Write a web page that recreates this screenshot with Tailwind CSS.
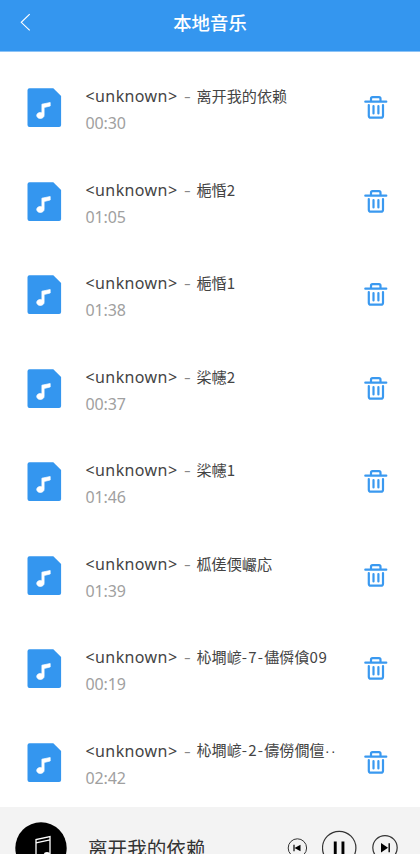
<!DOCTYPE html>
<html lang="zh">
<head>
<meta charset="utf-8">
<title>本地音乐</title>
<script src="https://cdn.jsdelivr.net/npm/@tailwindcss/browser@4"></script>
</head>
<body class="w-[420px] h-[854px] overflow-hidden bg-white font-['Noto_Sans','Noto_Sans_CJK_SC',sans-serif]">
<div class="flex h-[854px] w-[420px] flex-col overflow-hidden">
  <header class="grid h-[51px] shrink-0 grid-cols-[60px_1fr_60px] border-b border-[#8cc3f6] bg-[#3496ef] text-white box-content">
    <svg class="mt-[13px] ml-[19px]" width="14" height="19" viewBox="0 0 14 19" fill="none" stroke="#fff" stroke-width="1.15"><path d="M10.700 1.200 2.300 9.300l8.400 8.100"/></svg>
    <h1 class="h-[45px] text-center text-[18.4px] leading-[45px] font-medium font-['Noto_Sans_CJK_SC',sans-serif]">本地音乐</h1>
  </header>
  <main id="list" class="flex h-[755px] shrink-0 flex-col pt-[9.25px]"></main>
  <footer class="flex h-[90px] shrink-0 items-start bg-[#f3f3f3]">
    <svg class="mt-[15px] ml-[15px] shrink-0" width="52" height="52" viewBox="0 0 52 52"><circle cx="26" cy="26" r="25.700" fill="#000"/><path d="M21 34V17.500l14-3V32" fill="none" stroke="#fff" stroke-width="1.300"/><path d="M21 20.800l14-3" stroke="#fff" stroke-width="1.200"/><ellipse cx="18" cy="34.500" rx="3.300" ry="2.500" fill="#fff"/><ellipse cx="32" cy="32.500" rx="3.200" ry="2.600" fill="#fff"/></svg>
    <div class="mt-[27px] ml-[21px] w-[199px] text-[19.6px] leading-[28px] whitespace-nowrap text-[#333] font-['Noto_Sans_CJK_SC',sans-serif]">离开我的依赖</div>
    <svg class="mt-[31px]" width="20" height="20" viewBox="0 0 20 20"><circle cx="10.400" cy="10" r="9.200" fill="none" stroke="#333" stroke-width="1"/><path d="M7 6.800v6.500" stroke="#000" stroke-width="1.200"/><path d="M13.500 6.800v6.500L7.500 10z"/></svg>
    <svg class="mt-[23px] ml-[15px]" width="36" height="36" viewBox="0 0 36 36"><circle cx="17.200" cy="18" r="16.700" fill="none" stroke="#333" stroke-width="1.200"/><path d="M11.800 11.500h2.900v14h-2.900zM19.500 11.500h2.900v14h-2.900z"/></svg>
    <svg class="mt-[28px] ml-[13px]" width="28" height="28" viewBox="0 0 28 28"><circle cx="14" cy="12.800" r="12.200" fill="none" stroke="#333" stroke-width="1.200"/><path d="M10 8v9.600l7-4.800z"/><path d="M18.200 8.300v9" stroke="#000" stroke-width="1.400"/></svg>
  </footer>
</div>
<template id="row">
  <div class="flex h-[93.5px] shrink-0">
    <svg class="mt-[26px] ml-[26px] shrink-0" width="36" height="42" viewBox="0 0 36 42"><path d="M3.500 1.300h23.800l7.800 7.700v29a2 2 0 0 1-2 2H3.500a2 2 0 0 1-2-2V3.300a2 2 0 0 1 2-2z" fill="#3496ef"/><path d="M15.900 17.200 24.200 15.500V19l-6.100 1.500v7.700a3.700 3 0 1 1-2.200-2.500z" fill="#fff" stroke="#fff" stroke-width=".7" stroke-linejoin="round"/></svg>
    <div class="ml-[23.5px] w-[277px] pt-[22px]">
      <div class="flex h-[27px] items-center leading-[27px] whitespace-nowrap text-[#444]">
        <span class="w-[98px] text-[16px] tracking-[0.4px]">&lt;unknown&gt;</span>
        <span class="w-[13px] text-[15px] text-[#888]"><span class="inline-block origin-left scale-x-140">-</span></span>
        <span class="name -mt-[2px] text-[15.1px] font-['Noto_Sans_CJK_SC',sans-serif]"></span>
      </div>
      <div class="time text-[16px] leading-[27px] text-[#a0a0a0] tracking-[-0.1px]"></div>
    </div>
    <svg class="mt-[34px] shrink-0" width="26" height="26" viewBox="0 0 26 26" fill="none" stroke="#3a99f0" stroke-width="2.200" stroke-linecap="round" stroke-linejoin="round"><path d="M2.300 6.700h21M8 6.400V3.700a1.500 1.500 0 0 1 1.500-1.500h6.500a1.500 1.500 0 0 1 1.500 1.500v2.700M5.800 10v10.700a2 2 0 0 0 2 2h10.200a2 2 0 0 0 2-2V10M10.500 11v7.500M15.400 11v7.500"/></svg>
  </div>
</template>
<script>
const tracks = [
  ['离开我的依赖', '00:30'],
  ['梔惛2', '01:05'],
  ['梔惛1', '01:38'],
  ['桬幰2', '00:37'],
  ['桬幰1', '01:46'],
  ['柧傞偄巗応', '01:39'],
  ['杺墹嵃<span class="tracking-[1.2px]">-7-</span>儘僢僋<span class="tracking-[0.5px]">09</span>', '00:19'],
  [`杺墹嵃<span class="tracking-[1.2px]">-2-</span>儔僗僩儃<span class="font-['Liberation_Sans'] tracking-[1px]" lang="en">··</span>`, '02:42']
];
const row = document.getElementById('row'), list = document.getElementById('list');
for (const [name, time] of tracks) {
  const n = row.content.cloneNode(true);
  n.querySelector('.name').innerHTML = name;
  n.querySelector('.time').textContent = time;
  list.appendChild(n);
}
</script>
</body>
</html>
